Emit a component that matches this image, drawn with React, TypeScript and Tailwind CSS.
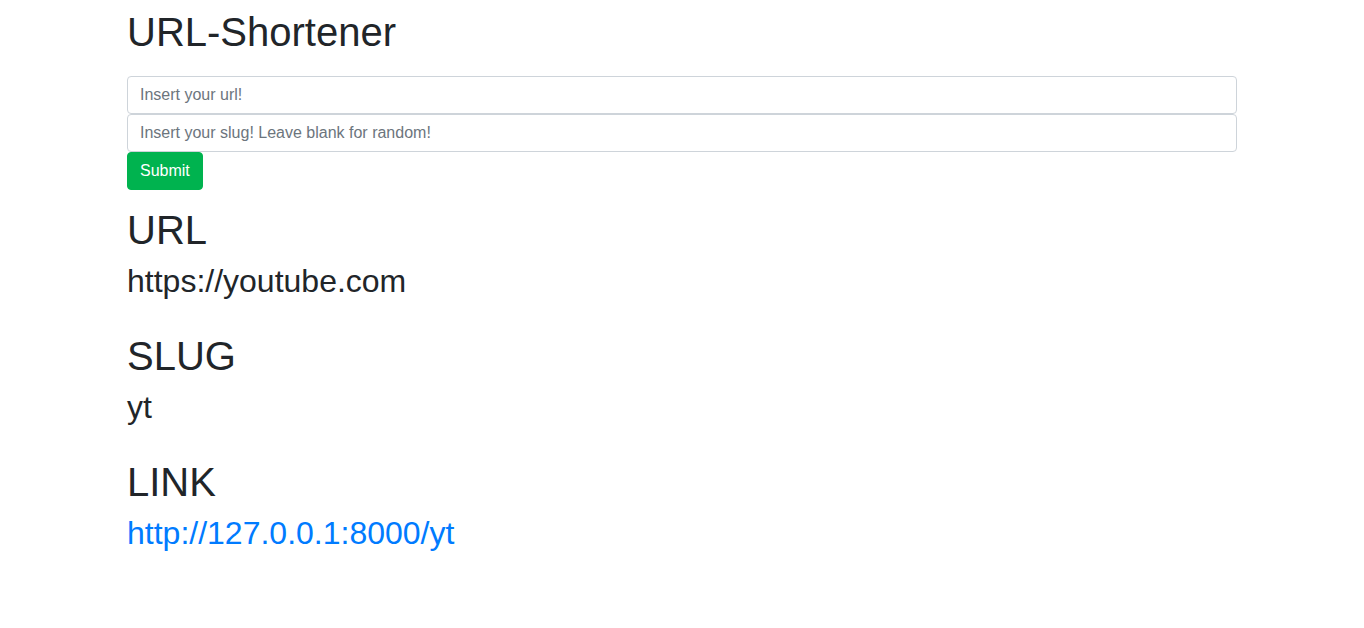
export default function App() {
  return (
    <div className="min-h-screen bg-white text-[#212529]" style={{ fontFamily: '"Liberation Sans", Arial, sans-serif' }}>
      <div className="mx-auto w-[1140px] px-[15px] pt-2">
        <h1 className="text-[40px] leading-[48px] font-normal">URL-Shortener</h1>
        <form className="mt-5 flex flex-col" onSubmit={(e) => e.preventDefault()}>
          <input
            className="h-[38px] w-full rounded-[4px] border border-[#ced4da] px-3 text-[16px] text-[#495057] placeholder:text-[#6c757d] outline-none"
            placeholder="Insert your url!"
          />
          <input
            className="h-[38px] w-full rounded-[4px] border border-[#ced4da] px-3 text-[16px] text-[#495057] placeholder:text-[#6c757d] outline-none"
            placeholder="Insert your slug! Leave blank for random!"
          />
          <div>
            <button
              type="submit"
              className="h-[38px] rounded-[4px] border border-[#00b34f] bg-[#00b34f] px-3 text-[16px] leading-[24px] text-white"
            >
              Submit
            </button>
          </div>
        </form>
        <div className="mt-4">
          <h1 className="text-[40px] leading-[48px] font-normal">URL</h1>
          <div className="mt-2 text-[32px] leading-[38.4px]">https://youtube.com</div>
          <h1 className="mt-[31.6px] text-[40px] leading-[48px] font-normal">SLUG</h1>
          <div className="mt-2 text-[32px] leading-[38.4px]">yt</div>
          <h1 className="mt-[31.6px] text-[40px] leading-[48px] font-normal">LINK</h1>
          <a href="#" className="mt-2 block text-[32px] leading-[38.4px] text-[#007bff]">
            http://127.0.0.1:8000/yt
          </a>
        </div>
      </div>
    </div>
  );
}
